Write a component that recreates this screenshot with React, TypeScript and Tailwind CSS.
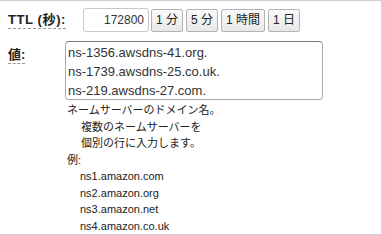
const presets = ['1 分', '5 分', '1 時間', '1 日']

const examples = ['ns1.amazon.com', 'ns2.amazon.org', 'ns3.amazon.net', 'ns4.amazon.co.uk']

const value = 'ns-1356.awsdns-41.org.\nns-1739.awsdns-25.co.uk.\nns-219.awsdns-27.com.\nns-1536.awsdns-00.co.uk.'

export default function App() {
  return (
    <div
      className="h-[235px] w-[381px] overflow-hidden border-y border-[#cfcfcf] bg-white text-[#333]"
      style={{ fontFamily: '"Liberation Sans", "Noto Sans CJK JP", sans-serif' }}
    >
      <div className="flex items-center pt-[7px]">
        <span className="ml-2 w-[75px] shrink-0 text-[13px] font-bold text-[#222]">
          <span className="border-b border-dashed border-[#999] pb-px tracking-[0.6px]">TTL (秒):</span>
        </span>
        <input
          readOnly
          value="172800"
          className="h-[24px] w-[66px] rounded-[3px] border border-[#c8c8c8] px-[4px] text-right text-[12px] text-[#333] outline-none"
        />
        <div className="ml-[2px] flex gap-[3px]">
          {presets.map((p) => (
            <button
              key={p}
              className="h-[23px] rounded-[2px] border border-[#b3b3b3] bg-gradient-to-b from-[#fafafa] to-[#e8e8e8] px-[4px] text-[12px] text-[#222]"
            >
              {p}
            </button>
          ))}
        </div>
      </div>

      <div className="mt-[9px] flex">
        <span className="ml-2 mt-[4px] w-[57px] shrink-0 text-[13px] font-bold text-[#222]">
          <span className="border-b border-dashed border-[#999] pb-px">値:</span>
        </span>
        <div>
          <textarea
            readOnly
            value={value}
            className="block h-[59px] w-[258px] resize-none overflow-hidden rounded-[4px] border border-[#aaa] border-t-[#777] px-[2px] py-px text-[13px] leading-[19px] text-[#333] outline-none"
          />
          <div className="mt-[2px] pl-[2px] text-[11px] leading-[16.5px] text-[#222]">
            <p>ネームサーバーのドメイン名。</p>
            <p className="pl-[14px]">複数のネームサーバーを</p>
            <p className="pl-[14px]">個別の行に入力します。</p>
            <p>例:</p>
            {examples.map((e) => (
              <p key={e} className="pl-[13px]">
                {e}
              </p>
            ))}
          </div>
        </div>
      </div>
    </div>
  )
}
